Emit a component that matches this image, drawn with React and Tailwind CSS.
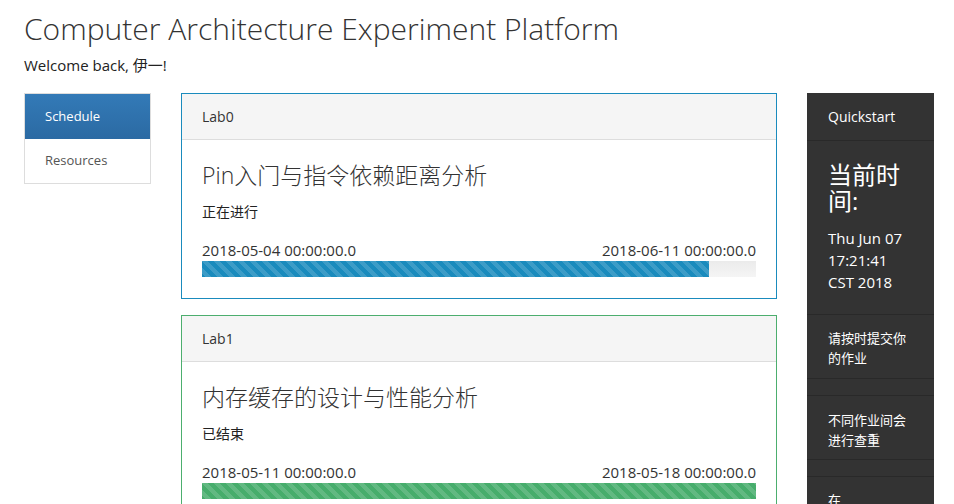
import React from 'react'

const stripes =
  'bg-[linear-gradient(45deg,rgba(255,255,255,.15)_25%,transparent_25%,transparent_50%,rgba(255,255,255,.15)_50%,rgba(255,255,255,.15)_75%,transparent_75%,transparent)] bg-[length:12px_12px]'

const labs = [
  {
    id: 'Lab0',
    title: 'Pin入门与指令依赖距离分析',
    status: '正在进行',
    start: '2018-05-04 00:00:00.0',
    end: '2018-06-11 00:00:00.0',
    border: 'border-[#1a8bbd]',
    bar: 'bg-[#1a8bbd] w-[91.5%]',
  },
  {
    id: 'Lab1',
    title: '内存缓存的设计与性能分析',
    status: '已结束',
    start: '2018-05-11 00:00:00.0',
    end: '2018-05-18 00:00:00.0',
    border: 'border-[#4cae6e]',
    bar: 'bg-[#47ad6c] w-full',
  },
]

function LabPanel({ lab }) {
  return (
    <div className={`border ${lab.border} bg-white mb-[16px]`}>
      <div className="h-[46px] bg-[#f5f5f5] border-b border-[#dddddd] px-[20px] flex items-center text-[14px] text-[#333]">
        {lab.id}
      </div>
      <div className="px-[20px] pt-[18px] pb-[21px]">
        <h3 className="text-[23px] font-light leading-[34px] text-[#333]">{lab.title}</h3>
        <p className="text-[14px] leading-[20px] mt-[10px] text-[#222]">{lab.status}</p>
        <div className="flex justify-between text-[15px] leading-[20px] mt-[18px] text-[#333]">
          <span>{lab.start}</span>
          <span>{lab.end}</span>
        </div>
        <div className="h-[16px] mt-[1px] bg-[linear-gradient(to_bottom,#ebebeb,#f5f5f5)]">
          <div className={`h-full ${lab.bar} ${stripes}`} />
        </div>
      </div>
    </div>
  )
}

export default function App() {
  return (
    <div className="min-h-screen bg-white pl-[24px] pr-[20px] text-[#333] font-['Open_Sans','Noto_Sans_CJK_SC',sans-serif]">
      <h1 className="text-[30px] font-light leading-[40px] pt-[9px] text-[#333]">
        Computer Architecture Experiment Platform
      </h1>
      <p className="text-[15px] leading-[20px] mt-[6px] text-[#222]">Welcome back, 伊一!</p>

      <div className="flex items-start gap-[30px] mt-[18px]">
        <div className="w-[127px] shrink-0 border border-[#dddddd] text-[13px]">
          <div className="h-[45px] flex items-center px-[20px] text-white bg-[linear-gradient(to_bottom,#337ab7,#2b6aa3)]">
            Schedule
          </div>
          <div className="h-[44px] flex items-center px-[20px] text-[#555] bg-white">Resources</div>
        </div>

        <div className="flex-1">
          {labs.map(l => (
            <LabPanel key={l.id} lab={l} />
          ))}
        </div>

        <div className="w-[127px] shrink-0 bg-[#333333] text-white">
          <div className="h-[48px] flex items-center px-[21px] text-[14px] border-b border-[#292929]">
            Quickstart
          </div>
          <div className="px-[21px] pt-[21px] pb-[21px] border-b border-[#292929]">
            <div className="text-[24px] leading-[26px]">当前时间:</div>
            <div className="text-[15px] leading-[22px] mt-[13px]">
              Thu Jun 07
              <br />
              17:21:41
              <br />
              CST 2018
            </div>
          </div>
          <div className="px-[21px] pt-[13px] pb-[10px] text-[13px] leading-[20px] border-b border-[#292929]">
            请按时提交你的作业
          </div>
          <div className="h-[17px] border-b border-[#292929]" />
          <div className="px-[21px] pt-[14px] pb-[9px] text-[13px] leading-[20px] border-b border-[#292929]">
            不同作业间会进行查重
          </div>
          <div className="h-[17px] border-b border-[#292929]" />
          <div className="px-[21px] pt-[13px] pb-[10px] text-[13px] leading-[20px] border-b border-[#292929]">
            在
            <br />
            截止日期前可多次提交
          </div>
        </div>
      </div>
    </div>
  )
}
